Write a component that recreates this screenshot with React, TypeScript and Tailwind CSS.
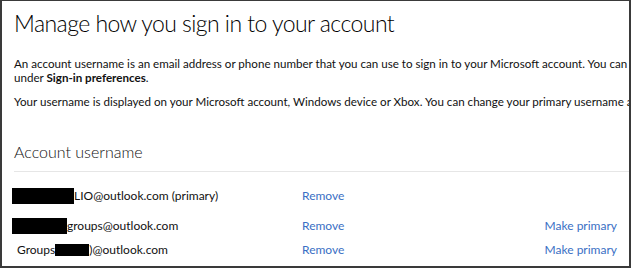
const rows = [
  { pre: '', box: 'w-[62px] h-[16px]', post: 'LIO@outlook.com (primary)', primary: true },
  { pre: '', box: 'w-[55px] h-[16px]', post: 'groups@outlook.com', primary: false },
  { pre: 'Groups', box: 'w-[34px] h-[12px]', post: ')@outlook.com', primary: false },
];

export default function App() {
  return (
    <div className="h-[268px] w-[631px] overflow-hidden bg-white">
      <div
        className="h-full w-full overflow-hidden border-x-2 border-t border-b-2 border-[#3a3a3a] pl-[12px] text-[#111]"
        style={{ fontFamily: 'Lato, "Open Sans", sans-serif' }}
      >
        <h1 className="mt-[4px] whitespace-nowrap text-[23px] font-light leading-[36px] tracking-[-0.55px] text-black">
          Manage how you sign in to your account
        </h1>
        <div className="mt-[16px] whitespace-nowrap text-[11.6px] leading-[14px]">
          <p>
            An account username is an email address or phone number that you can use to sign in to your Microsoft account. You can have
          </p>
          <p>
            under <span className="font-bold">Sign-in preferences</span>.
          </p>
          <p className="mt-[10px]">
            Your username is displayed on your Microsoft account, Windows device or Xbox. You can change your primary username at any time.
          </p>
        </div>
        <h2 className="mt-[33px] text-[16px] font-light leading-[20px]">Account username</h2>
        <div className="mt-[9px] border-t border-[#e6e6e6]" />
        <div className="text-[12px]">
          {rows.map((r, i) => (
            <div
              key={i}
              className={`flex items-center ${i === 0 ? 'mt-[15px] h-[18px]' : i === 1 ? 'mt-[12px] h-[18px]' : 'mt-[6px] h-[18px]'}`}
            >
              <div className="flex w-[288px] items-center">
                {r.pre && <span className="ml-[3px]">{r.pre}</span>}
                <span className={`inline-block bg-black ${r.box} ${r.pre ? '' : '-ml-[2px]'}`} />
                <span>{r.post}</span>
              </div>
              <a className="w-[100px] cursor-pointer text-[#3a6fc4]">Remove</a>
              <div className="flex-1" />
              {!r.primary && <a className="mr-[12px] cursor-pointer text-[#3a6fc4]">Make primary</a>}
            </div>
          ))}
        </div>
      </div>
    </div>
  );
}
